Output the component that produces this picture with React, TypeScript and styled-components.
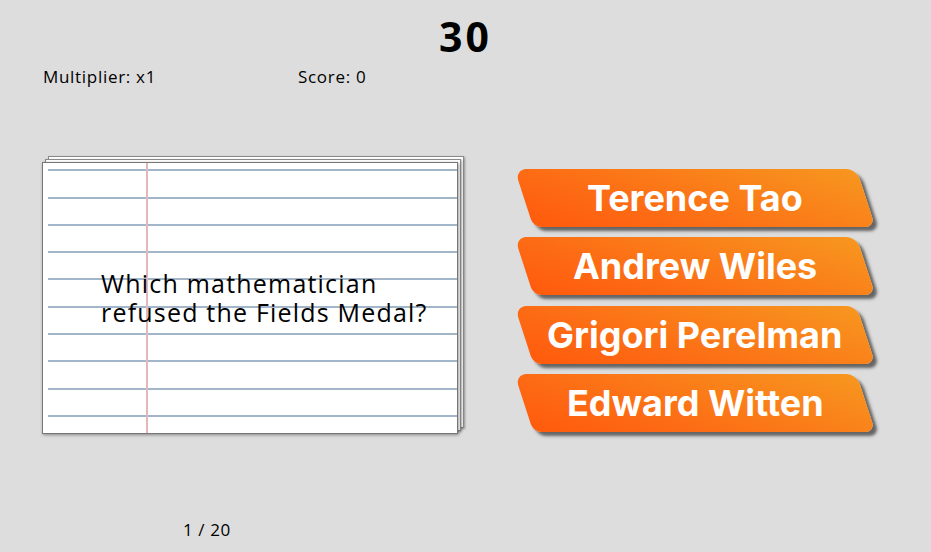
import * as React from 'react';
import styled, { createGlobalStyle } from 'styled-components';

const GlobalStyle = createGlobalStyle`
  html, body {
    margin: 0;
    padding: 0;
    background: #dddddd;
  }
  body {
    font-family: 'Open Sans', 'Liberation Sans', sans-serif;
    color: #000;
  }
`;

const Page = styled.div`
  width: 931px;
  height: 552px;
  display: flex;
  flex-direction: column;
  overflow: hidden;
`;

const Timer = styled.h1`
  margin: 14px 0 0;
  text-align: center;
  font-family: 'Open Sans', sans-serif;
  font-weight: 700;
  font-size: 41px;
  line-height: 44px;
  letter-spacing: 3px;
`;

const Stats = styled.div`
  display: flex;
  padding-left: 43px;
  margin-top: 7px;
  font-family: 'Open Sans', sans-serif;
  font-size: 17px;
  line-height: 24px;
  letter-spacing: 0.7px;
`;

const Stat = styled.span<{ width?: number }>`
  width: ${(p) => (p.width ? `${p.width}px` : 'auto')};
`;

const Main = styled.div`
  display: flex;
  align-items: center;
  margin-top: 73px;
  padding-left: 42px;
`;

const CardStack = styled.div`
  position: relative;
  width: 416px;
  height: 272px;

  &::before,
  &::after {
    content: '';
    position: absolute;
    inset: 0;
    background: #fff;
    border: 1px solid #8a8a8a;
    box-shadow: 1px 1px 2px rgba(0, 0, 0, 0.35);
  }
  &::before {
    transform: translate(6px, -6px);
  }
  &::after {
    transform: translate(3px, -3px);
  }
`;

const Card = styled.div`
  position: relative;
  z-index: 1;
  box-sizing: border-box;
  width: 100%;
  height: 100%;
  border: 1px solid #777;
  box-shadow: 1px 1px 3px rgba(0, 0, 0, 0.4);
  background-color: #fff;
  background-image:
    linear-gradient(90deg, transparent 103px, #e3b8b8 103px, #e3b8b8 105px, transparent 105px),
    repeating-linear-gradient(180deg, transparent 0, transparent 6.2px, #a3b5c8 6.2px, #a3b5c8 8.2px, transparent 8.2px, transparent 27.3px);
  background-position: 0 0, 5px 0;
  background-size: 100% 100%, calc(100% - 5px) 100%;
  background-repeat: no-repeat;
  display: flex;
  align-items: center;
  padding-left: 58px;
`;

const Question = styled.p`
  margin: 0;
  font-family: 'Open Sans', sans-serif;
  font-size: 25px;
  line-height: 29px;
  letter-spacing: 1.2px;
  max-width: 345px;
`;

const Answers = styled.div`
  display: flex;
  flex-direction: column;
  gap: 10px;
  margin-left: 66px;
  margin-top: 5px;
`;

const AnswerButton = styled.button`
  width: 342px;
  height: 58.3px;
  border: none;
  padding: 0;
  cursor: pointer;
  border-radius: 12px 10px 10px 8px;
  transform: skewX(18deg);
  background: linear-gradient(200deg, #f7971f 0%, #fd6a14 70%, #ff5a0c 100%);
  box-shadow: 3px 4px 3px rgba(0, 0, 0, 0.55);
  display: flex;
  align-items: center;
  justify-content: center;
`;

const AnswerText = styled.span`
  transform: skewX(-18deg);
  color: #fff;
  font-family: 'Inter', sans-serif;
  font-weight: 700;
  font-size: 36px;
  letter-spacing: 0;
  white-space: nowrap;
`;

const Footer = styled.div`
  margin-top: auto;
  margin-bottom: 11px;
  padding-left: 183px;
  font-family: 'Open Sans', sans-serif;
  font-size: 17px;
  letter-spacing: 0.6px;
`;

const answers = ['Terence Tao', 'Andrew Wiles', 'Grigori Perelman', 'Edward Witten'];

export default function App() {
  return (
    <Page>
      <GlobalStyle />
      <Timer>30</Timer>
      <Stats>
        <Stat width={255}>Multiplier: x1</Stat>
        <Stat>Score: 0</Stat>
      </Stats>
      <Main>
        <CardStack>
          <Card>
            <Question>Which mathematician refused the Fields Medal?</Question>
          </Card>
        </CardStack>
        <Answers>
          {answers.map((a) => (
            <AnswerButton key={a}>
              <AnswerText>{a}</AnswerText>
            </AnswerButton>
          ))}
        </Answers>
      </Main>
      <Footer>1 / 20</Footer>
    </Page>
  );
}
